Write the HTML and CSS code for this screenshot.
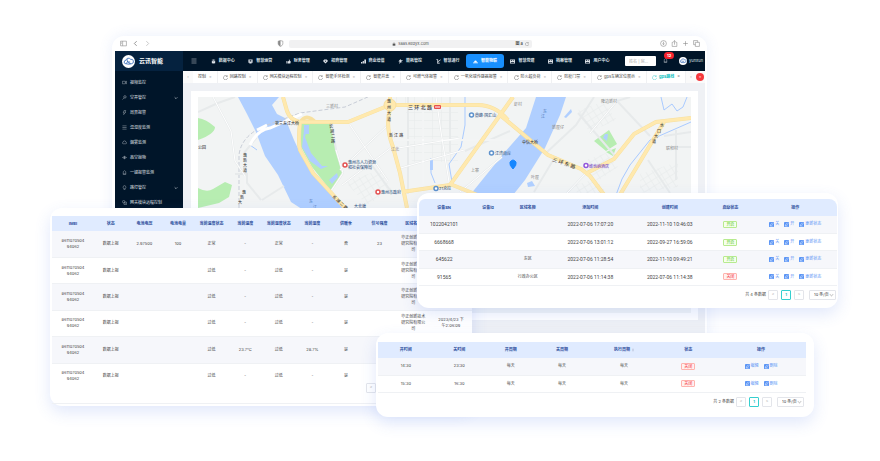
FILE: index.html
```html
<!DOCTYPE html>
<html lang="zh-CN">
<head>
<meta charset="utf-8">
<title>云讯智能</title>
<link rel="stylesheet" href="styles.css">
</head>
<body>
<svg class="defs" aria-hidden="true">
  <symbol id="reload" viewBox="0 0 12 12"><path d="M9.8 3.2A5 5 0 1 0 11 7M10.3.8v2.8H7.5"/></symbol>
  <symbol id="cube" viewBox="0 0 12 12"><path class="solid" d="M1 2.500 6 1l5 1.500-5 1.500zM2 4.500 6 5.500 10 4.500V10L6 11 2 10z"/></symbol>
  <symbol id="screen" viewBox="0 0 12 12"><path class="solid" fill-rule="evenodd" d="M1 1h10v8H8l1 2H3l1-2H1zM4 3v3h4V3z"/></symbol>
  <symbol id="hand" viewBox="0 0 12 12"><path class="solid" d="M1 5h2v6H1zM4 6l3-1V1l2 1v3h2v5l-2 1H4z"/></symbol>
  <symbol id="gem" viewBox="0 0 12 12"><path class="solid" fill-rule="evenodd" d="M3 1h6l3 4-6 6-6-6zM4 4l2 3 2-3z"/></symbol>
  <symbol id="bars" viewBox="0 0 12 12"><path class="solid" d="M0 7h3v4H0zM4 5h3v6H4zM8 1h4v10H8z"/></symbol>
  <symbol id="bolt" viewBox="0 0 12 12"><path class="solid" d="M6 0 1 6h3l-1 6 4-4h4L7 5h4V3H7z"/></symbol>
  <symbol id="gate" viewBox="0 0 12 12"><path d="M1 1h3v10M4 7l7-5M4 10h5" stroke-width="2"/></symbol>
  <symbol id="cloud" viewBox="0 0 14 12"><path class="solid" d="M4 6a3 3 0 0 1 6 0h1v2H3V6zM0 9h14v2H0z"/></symbol>
  <symbol id="doc" viewBox="0 0 12 12"><path class="solid" fill-rule="evenodd" d="M0 1h12v10H0zM2 3v2h3V3zM7 3v1h3V3zM2 7v2h8V7z"/></symbol>
  <symbol id="camera" viewBox="0 0 12 12"><path d="M1 3h7v6H1zM8 5l3-2v6L8 7"/></symbol>
  <symbol id="key" viewBox="0 0 12 12"><circle cx="7" cy="4.500" r="3"/><path d="M5 7 1 11M7 4v2"/></symbol>
  <symbol id="flash" viewBox="0 0 12 12"><path d="M5 1h4L7 5h2L4 11l1-5H3z"/></symbol>
  <symbol id="list" viewBox="0 0 12 12"><path d="M1 2h10M1 6h10M1 10h10"/></symbol>
  <symbol id="smoke" viewBox="0 0 12 12"><path d="M3 9a2 2 0 0 1 0-4 3 3 0 0 1 6 0 2 2 0 0 1 0 4z"/></symbol>
  <symbol id="eye" viewBox="0 0 12 12"><path d="M1 6q5-6 10 0-5 6-10 0zM6 3v6"/><circle cx="6" cy="6" r="1.500"/></symbol>
  <symbol id="alarm" viewBox="0 0 12 12"><path d="M3 10V4q3-5 6 0v6zM2 10h8"/></symbol>
  <symbol id="lamp" viewBox="0 0 12 12"><path d="M4 9Q1 5 4 2q2-1 4 0 3 3 0 7zM4 11h4"/></symbol>
  <symbol id="module" viewBox="0 0 12 12"><circle cx="4" cy="4" r="3"/><path d="M5 5h6v6H5zM7 8h2"/></symbol>
  <symbol id="edit" viewBox="0 0 12 12"><rect class="solid" width="12" height="12" rx="2"/><path class="cut" d="M3 9l1-3 4-4 2 2-4 4zM3 10h6"/></symbol>
</svg>

<main class="stage">
  <section class="browser">
    <header class="chrome">
      <div class="chrome-side">
        <svg class="tool" viewBox="0 0 12 12"><path d="M1 2h10v8H1zM4.500 2v8M2 4h1M2 6h1"/></svg>
        <svg class="tool" viewBox="0 0 12 12"><path d="M8 2 4 6l4 4" stroke-width="1.500"/></svg>
        <svg class="tool faint" viewBox="0 0 12 12"><path d="m4 2 4 4-4 4" stroke-width="1.500"/></svg>
      </div>
      <svg class="tool shield" viewBox="0 0 12 12"><path d="M6 1 2 2v5q1 3 4 4 3-1 4-4V2z"/><path class="solid" d="M6 1 2 2v5q1 3 4 4z"/></svg>
      <div class="address"><span></span>
        <span class="host"><svg class="lock" viewBox="0 0 12 12"><path class="solid" d="M2 5h8v6H2z"/><path d="M4 5V3q2-3 4 0v2"/></svg>saas.kedyx.com</span>
        <span class="address-end"><b>图 a</b><svg class="lock" viewBox="0 0 12 12"><use href="#reload"/></svg></span>
      </div>
      <div class="chrome-actions">
        <svg class="tool" viewBox="0 0 12 12"><circle cx="6" cy="6" r="5"/><path d="M6 3v5M4 6l2 2 2-2"/></svg>
        <svg class="tool" viewBox="0 0 12 12"><path d="M4 4H2v7h8V4H8M6 8V1M4 3l2-2 2 2"/></svg>
        <svg class="tool" viewBox="0 0 12 12"><path d="M6 2v8M2 6h8"/></svg>
        <svg class="tool" viewBox="0 0 12 12"><path d="M4 4h7v7H4zM8 4V1H1v7h3"/></svg>
      </div>
    </header>
    <div class="app">
      <aside class="sidebar">
        <div class="brand"><svg class="logo" viewBox="0 0 24 24"><circle cx="12" cy="12" r="12" fill="#fff"/><path d="M7 16a3 3 0 0 1 0-6 5 5 0 0 1 9-2 4 4 0 0 1 2 8q-6 2-11 0zm0 0q3-5 8-3M10 8q-2 6 6 8" fill="none" stroke="#2d65b5" stroke-width="1.500"/></svg>云讯智能</div>
        <nav class="menu">
          <a href="#"><svg><use href="#camera"/></svg>视频监控</a>
          <a href="#"><svg><use href="#key"/></svg>空开管控<svg class="more" viewBox="0 0 12 12"><path d="m2 4 4 4 4-4" stroke-width="2"/></svg></a>
          <a href="#"><svg><use href="#flash"/></svg>周界报警</a>
          <a href="#"><svg><use href="#list"/></svg>温湿度监测</a>
          <a href="#"><svg><use href="#smoke"/></svg>烟雾监测</a>
          <a href="#"><svg><use href="#eye"/></svg>高空抛物</a>
          <a href="#"><svg><use href="#alarm"/></svg>一键报警监测</a>
          <a href="#"><svg><use href="#lamp"/></svg>路灯管控<svg class="more" viewBox="0 0 12 12"><path d="m2 4 4 4 4-4" stroke-width="2"/></svg></a>
          <a href="#"><svg><use href="#module"/></svg>网关模块远程控制</a>
        </nav>
      </aside>
      <div class="main">
        <div class="topbar">
          <svg class="fold"><use href="#list"/></svg>
          <nav class="topnav">
            <a href="#"><svg><use href="#cube"/></svg>数据中心</a>
            <a href="#"><svg><use href="#screen"/></svg>智慧运营</a>
            <a href="#"><svg><use href="#hand"/></svg>财务管理</a>
            <a href="#"><svg><use href="#gem"/></svg>招商管理</a>
            <a href="#"><svg><use href="#bars"/></svg>商业增值</a>
            <a href="#"><svg><use href="#bolt"/></svg>能耗管控</a>
            <a href="#"><svg><use href="#gate"/></svg>智慧通行</a>
            <a href="#" class="active"><svg><use href="#cloud"/></svg>智能物联</a>
            <a href="#"><svg><use href="#doc"/></svg>智慧党建</a>
            <a href="#"><svg><use href="#doc"/></svg>档案管理</a>
            <a href="#"><svg><use href="#doc"/></svg>用户中心</a>
          </nav>
          <input class="search" type="text" aria-label="搜索" placeholder="姓名 | 房...">
          <span class="bell"><svg><use href="#alarm"/></svg><b>12</b></span>
          <span class="user"><svg viewBox="0 0 24 24"><circle cx="12" cy="12" r="12" fill="#fff"/><path d="M7 16a3 3 0 0 1 0-6 5 5 0 0 1 9-2 4 4 0 0 1 2 8q-6 2-11 0zm0 0q3-5 8-3" fill="none" stroke="#2d65b5" stroke-width="2"/></svg>yunxun</span>
        </div>
        <div class="tabs">
          <span class="arrow">‹</span>
          <a href="#" class="first">控制<i>×</i></a>
          <a href="#"><svg><use href="#reload"/></svg>回路控制<i>×</i></a>
          <a href="#"><svg><use href="#reload"/></svg>网关模块远程控制<i>×</i></a>
          <a href="#"><svg><use href="#reload"/></svg>智能手环检测<i>×</i></a>
          <a href="#"><svg><use href="#reload"/></svg>智能井盖<i>×</i></a>
          <a href="#"><svg><use href="#reload"/></svg>可燃气体报警<i>×</i></a>
          <a href="#"><svg><use href="#reload"/></svg>一氧化碳传感器报警<i>×</i></a>
          <a href="#"><svg><use href="#reload"/></svg>防火超负荷<i>×</i></a>
          <a href="#"><svg><use href="#reload"/></svg>防疫门禁<i>×</i></a>
          <a href="#"><svg><use href="#reload"/></svg>gps车辆定位展示<i>×</i></a>
          <a href="#" class="current"><svg><use href="#reload"/></svg>gps路线<i>×</i></a>
          <span class="arrow">›</span>
          <button class="close-all" aria-label="关闭全部">×</button>
        </div>
        <div class="content">
          <svg class="map" viewBox="198 97 493 216" preserveAspectRatio="xMinYMin slice">
            <defs>
              <pattern id="blocks" width="9" height="8" patternUnits="userSpaceOnUse"><path d="M0 0h9M0 0v8" stroke="#e6e9ea" stroke-width="1" fill="none"/></pattern>
              <pattern id="slant" width="6" height="6" patternUnits="userSpaceOnUse" patternTransform="rotate(-32)"><path d="M0 0h6M0 0v6" stroke="#e6e9ea" stroke-width="1" fill="none"/></pattern>
            </defs>
            <path d="M198 97h493v216H198z" fill="#f2f4f4"/>
            <path d="M393 97h56l-6 8h-50zM406 110h52v52h-46z" fill="url(#blocks)"/>
            <path d="m578 110 25-8 14 18-28 12zM578 163l28-10 12 14-20 14zM640 174l38-12v25l-38 6zM575 185l20-6 12 14h-30zM345 182l35-12 12 20-25 15z" fill="url(#slant)"/>
            <g fill="#b7edb1">
              <path d="M198 118q8 1 17 9 0 7-17 13zM198 188q9 5 15 1l12-7 7 3-3 12-10 6-21 5zM301 124l29-1 6 28 6 22-11 18-19-24-11-20zM298 123h12v28l-8-4zM594 141l15-11 8 14-11 7zM606 152l10-4-3 8z"/>
            </g>
            <g fill="#b0cfff">
              <path d="M238 97h41l-7 8 5 9 8 4 9 22 8 17 15 21 31 32v16h-20l-37-24-13-27-13-19-9-24-9-18zM536 97h30l-6 18-15 33-20 32-16 20h-43l38-47 22-25z"/>
              <path d="m304 130 4-5-3 12 6 16 11 13 6 0-7 3-11-8-8-14zM304 125h5v9h-5zM329 180l8-7 1 4-6 7zM605 134l3 0-1 7-4-3zM527 183l5-2 3 5-7 1zM430 158h3v12h-3zM564 117l7-8 1 3-6 6z"/>
            </g>
            <g fill="none" stroke="#a9caff" stroke-width="1">
              <path d="M465 97v28l-4 22-12 17 3 18M691 122l-41 18-20 25-8 14-6 16M661 97l3 13 8-6 5 7 6-4 4-10M431 158v15l4 10M250 145l7 5"/>
            </g>
            <g fill="none" stroke="#c8cdd7" stroke-width="1" stroke-dasharray="4 2">
              <path d="M239 208v-53q2-18 23-28l38-14 45-6 25-11"/>
            </g>
            <g fill="none" stroke="#e7eaeb" stroke-width="2">
              <path d="M198 112l20-9 17-6M213 97l18 34 4 30 10 15v17M235 174h12v9l14 17M257 137l-13 16M262 200l22-14M331 191l12-18-7-23-4-27M340 170l48-45M350 125l12 18 26 38M368 160l22 30M342 185l50-38M392 149l68-11M397 169l67-19M389 140h121M408 97v97M423 97v87M436 97l5 35 8 50M450 97v55M465 151l45-20M460 192l42-35M590 133l27-32 13-4M617 101l33 35M578 113l38 44M664 136l27-4M648 160l22 33M670 147h21M676 130v50M546 153l30-28 18-28M555 157l-21 35M567 193l20-21"/>
            </g>
            <g fill="none" stroke="#fff" stroke-width="1">
              <path d="M213 97l18 34 4 30 10 15v17M331 191l12-18-7-23M340 170l48-45M350 125l12 18 26 38M342 185l50-38M392 149l68-11M397 169l67-19M389 140h121M423 97v87M436 97l5 35 8 50M460 192l42-35M590 133l27-32M567 193l20-21"/>
            </g>
            <path d="M250 145q7-15 20-17l32-14M257 130l10-5" fill="none" stroke="#fff" stroke-width="3"/>
            <g fill="none" stroke="#f7e0a0" stroke-width="4">
              <path d="M283 97l4 14q3 9 13 11h48l32-13 10-4h88q17 0 30 15M300 122q-2 20 0 28l13 23 33 36M390 97v12q-5 17 3 38l7 26 7 35M402 192l48-7 63-88M450 184l30 12M500 115l48 40 33 14 9 7 15 20M587 173l27-14 20-25 22-12 35-4M664 122l-46 76"/>
              <path d="M300 123q6-11 16 0"/>
            </g>
            <g fill="none" stroke="#ffe9ae" stroke-width="3">
              <path d="M283 97l4 14q3 9 13 11h48l32-13 10-4h88q17 0 30 15M300 122q-2 20 0 28l13 23 33 36M390 97v12q-5 17 3 38l7 26 7 35M402 192l48-7 63-88M450 184l30 12M500 115l48 40 33 14 9 7 15 20M587 173l27-14 20-25 22-12 35-4M664 122l-46 76"/>
            </g>
            <circle cx="390" cy="105" r="6" fill="#ffe9ae" stroke="#f7e0a0"/>
            <rect x="434" y="105" width="7" height="4" rx="1" fill="#e8504c"/><path d="M435 107h5" stroke="#fff"/>
            <g class="poi-pins">
              <circle cx="471.500" cy="115" r="2" stroke="#5d91cc"/><circle cx="491.500" cy="153" r="2" stroke="#5d91cc"/><circle cx="436" cy="188.500" r="2" stroke="#5d91cc"/>
              <circle cx="345" cy="165" r="2" stroke="#e45252"/><circle cx="378" cy="192" r="2" stroke="#e45252"/><circle cx="586" cy="165.500" r="2" stroke="#9358db"/>
            </g>
            <path d="M513 169q-4-4-3-7 3-4 6 0 1 3-3 7z" fill="#1687ff" stroke="#1687ff"/>
            <g class="place">
              <text x="326" y="108">三新村</text><text x="391" y="151">江北</text><text x="471" y="172">上寨</text><text x="514" y="106">虾村</text><text x="552" y="129">新屋仔</text><text x="601" y="103">隆边新村</text><text x="666" y="150">联和村</text><text x="531" y="179">叶屋</text>
            </g>
            <g class="road">
              <text x="275" y="125">第三东江大桥</text><text x="408" y="109" class="wide">三 环 北 路</text><text x="389" y="137">新 江 路</text><text x="522" y="144">中信大桥</text>
              <text x="387" y="103">惠</text><text x="387" y="109">州</text><text x="387" y="115">大</text><text x="387" y="121">道</text>
              <text x="243" y="157">惠</text><text x="243" y="162">新</text><text x="243" y="167">大</text><text x="243" y="172">道</text>
              <text x="242" y="194">惠</text><text x="240" y="199">新</text><text x="238" y="204">大</text>
              <text x="329" y="128">长</text><text x="330" y="133">湖</text><text x="331" y="138">二</text><text x="331" y="143">路</text>
              <text transform="translate(332 197) rotate(42)">长 湖 二 路</text><text transform="translate(552 161) rotate(19)" class="wide">三 环 东 路</text>
              <text x="660" y="127">水</text><text x="657" y="133">口</text><text x="654" y="138">大</text><text x="652" y="143">道</text>
              <text x="198" y="149">公园</text>
            </g>
            <g class="water"><text x="543" y="113">东</text><text x="541" y="118">江</text><text x="309" y="203">东</text><text x="313" y="209">江</text></g>
            <g class="poi"><text x="475" y="117">鼎峰·国汇山</text><text x="495" y="155">江湾南岸</text><text x="439" y="190">21克拉</text><text x="348" y="164">惠州市人力资源</text><text x="348" y="169">和社会保障局</text><text x="381" y="194">惠州市政府</text><text x="354" y="208">大北塘</text></g>
            <text class="hotel" x="589" y="168">维也纳酒店</text>
          </svg>
        </div>
      </div>
    </div>
  </section>

  <section class="card sensors">
    <div class="clip">
      <table>
        <thead><tr><th>IMEI</th><th>状态</th><th>电池电压</th><th>电池电量</th><th>当前温度状态</th><th>当前温度</th><th>当前湿度状态</th><th>当前湿度</th><th>供暖季</th><th>信号强度</th><th>区域名称</th><th></th></tr></thead>
        <tbody>
          <tr><td>8611070504<br>94062</td><td>数据上报</td><td>2.97500</td><td>100</td><td>正常</td><td>-</td><td>正常</td><td>-</td><td>否</td><td>23</td><td>华正创新技术研究院有限公司</td><td></td></tr>
          <tr><td>8611070504<br>94062</td><td>数据上报</td><td></td><td></td><td>过低</td><td>-</td><td>过低</td><td>-</td><td>是</td><td></td><td>华正创新技术研究院有限公司</td><td></td></tr>
          <tr><td>8611070504<br>94062</td><td>数据上报</td><td></td><td></td><td>过低</td><td>-</td><td>过低</td><td>-</td><td>是</td><td></td><td>华正创新技术研究院有限公司</td><td></td></tr>
          <tr><td>8611070504<br>94062</td><td>数据上报</td><td></td><td></td><td>过低</td><td>-</td><td>过低</td><td>-</td><td>是</td><td></td><td>华正创新技术研究院有限公司</td><td>2023/4/23 下<br>午2:06:09</td></tr>
          <tr><td>8611070504<br>94062</td><td>数据上报</td><td></td><td></td><td>过低</td><td>23.7°C</td><td>过低</td><td>28.7%</td><td>是</td><td></td><td></td><td></td></tr>
          <tr><td>8611070504<br>94062</td><td>数据上报</td><td></td><td></td><td>过低</td><td>-</td><td>过低</td><td>-</td><td>是</td><td></td><td></td><td></td></tr>
        </tbody>
      </table>
    </div>
    <div class="sensor-foot"><button class="page" aria-label="上一页">&lt;</button></div>
  </section>

  <section class="card devices">
    <table>
      <thead><tr><th>设备SN</th><th>设备id</th><th>区域名称</th><th>添加时间</th><th>创建时间</th><th>启动状态</th><th>操作</th></tr></thead>
      <tbody>
        <tr><td class="num">1022042101</td><td></td><td></td><td class="num">2022-07-06 17:07:20</td><td class="num">2022-11-10 10:46:03</td><td><span class="tag on">开启</span></td><td><div class="ops"><a href="#"><svg><use href="#edit"/></svg>关</a><a href="#"><svg><use href="#edit"/></svg>开</a><a href="#"><svg><use href="#edit"/></svg>更新状态</a></div></td></tr>
        <tr><td class="num">6668668</td><td></td><td></td><td class="num">2022-07-06 13:01:12</td><td class="num">2022-09-27 16:59:06</td><td><span class="tag on">开启</span></td><td><div class="ops"><a href="#"><svg><use href="#edit"/></svg>关</a><a href="#"><svg><use href="#edit"/></svg>开</a><a href="#"><svg><use href="#edit"/></svg>更新状态</a></div></td></tr>
        <tr><td class="num">645622</td><td></td><td>东区</td><td class="num">2022-07-06 11:28:54</td><td class="num">2022-11-10 09:49:21</td><td><span class="tag on">开启</span></td><td><div class="ops"><a href="#"><svg><use href="#edit"/></svg>关</a><a href="#"><svg><use href="#edit"/></svg>开</a><a href="#"><svg><use href="#edit"/></svg>更新状态</a></div></td></tr>
        <tr><td class="num">91565</td><td></td><td>行政办公区</td><td class="num">2022-07-06 11:14:38</td><td class="num">2022-07-06 11:14:38</td><td><span class="tag off">关闭</span></td><td><div class="ops"><a href="#"><svg><use href="#edit"/></svg>关</a><a href="#"><svg><use href="#edit"/></svg>开</a><a href="#"><svg><use href="#edit"/></svg>更新状态</a></div></td></tr>
      </tbody>
    </table>
    <div class="pager"><span>共 4 条数据</span><button class="page">&lt;</button><button class="page here">1</button><button class="page">&gt;</button><span class="size"><select aria-label="每页条数"><option>10 条/页</option></select></span></div>
  </section>

  <section class="card schedule">
    <table>
      <thead><tr><th>开时间</th><th>关时间</th><th>开周期</th><th>关周期</th><th>执行周期 <svg class="sort" viewBox="0 0 6 12"><path class="solid" d="m3 1 3 4H0zM3 11l3-4H0z"/></svg></th><th>状态</th><th>操作</th></tr></thead>
      <tbody>
        <tr><td>14:30</td><td>23:30</td><td>每天</td><td>每天</td><td>每天</td><td><span class="tag off">关闭</span></td><td><div class="ops"><a href="#"><svg><use href="#edit"/></svg>编辑</a><a href="#"><svg><use href="#edit"/></svg>删除</a></div></td></tr>
        <tr><td>15:30</td><td>16:30</td><td>每天</td><td>每天</td><td>每天</td><td><span class="tag off">关闭</span></td><td><div class="ops"><a href="#"><svg><use href="#edit"/></svg>编辑</a><a href="#"><svg><use href="#edit"/></svg>删除</a></div></td></tr>
      </tbody>
    </table>
    <div class="pager"><span>共 2 条数据</span><button class="page">&lt;</button><button class="page here">1</button><button class="page">&gt;</button><span class="size"><select aria-label="每页条数"><option>10 条/页</option></select></span></div>
  </section>
</main>
</body>
</html>
```

FILE: styles.css
```css
* { box-sizing: border-box; }

body {
  margin: 0;
  background: #fff;
  color: #444;
  font: 4px/6px Inter, "Noto Sans CJK SC", sans-serif;
}

a { color: inherit; text-decoration: none; }
i { font-style: normal; }
button, input, select { margin: 0; padding: 0; font: inherit; color: inherit; }
svg { flex: none; fill: none; stroke: currentColor; }
.solid { fill: currentColor; stroke: none; }
.cut { fill: none; stroke: #fff; }
.defs { position: absolute; width: 0; height: 0; }

/* Overlapping panels share one grid row and differ in columns and top margin. */
.stage {
  display: grid;
  grid-template-columns:
    minmax(0, 50fr) minmax(0, 62fr) minmax(0, 264fr) minmax(0, 41fr)
    minmax(0, 55fr) minmax(0, 235fr) minmax(0, 107fr) minmax(0, 24fr)
    minmax(0, 42fr);
  align-items: start;
  padding-bottom: 45px;
  overflow: hidden;
}

.stage > section { grid-row: 1; }

/* Browser window */
.browser {
  grid-column: 3 / 7;
  margin-top: 36px;
  border: solid #fff;
  border-width: 0 2px 0 3px;
  border-radius: 12px 12px 0 0;
  background: #fff;
  box-shadow: 0 0 14px rgba(80, 120, 220, .12);
}

.chrome { display: flex; align-items: center; height: 15px; padding: 0 5px; color: #888; }
.tool { width: 7px; height: 7px; }
.faint { opacity: .5; }
.chrome-side, .chrome-actions { display: flex; gap: 4px; }
.chrome-side { flex: 159; gap: 5px; }
.shield { margin-right: 5px; }
.address { display: flex; flex: 239; justify-content: space-between; align-items: center; height: 8px; padding: 0 3px; border-radius: 2px; background: #f1f1f2; color: #555; }
.address > span { flex: 1; }
.address > .host { display: flex; justify-content: center; align-items: center; gap: 2px; }
.address > .address-end { display: flex; justify-content: flex-end; align-items: center; gap: 2px; }
.lock { width: 4px; height: 4px; }
.chrome-actions { flex: 170; justify-content: flex-end; }

.app { display: flex; min-height: 290px; }

.sidebar { flex: 68; min-width: 0; background: #001529; color: #c3cad1; }
.brand { display: flex; align-items: center; gap: 4px; height: 20px; padding-left: 7px; background: #05223f; color: #fff; font-size: 6px; font-weight: 700; }
.logo { width: 13px; height: 13px; stroke: none; }
.menu { padding-top: 4px; }
.menu a { display: flex; align-items: center; gap: 3px; height: 15px; padding: 0 5px 0 7px; font-weight: 500; white-space: nowrap; }
.menu svg, .topnav svg, .tabs svg, .bell svg { width: 5px; height: 5px; }
.menu .more { width: 4px; height: 4px; margin-left: auto; }

.main { flex: 522; min-width: 0; background: #eff1f5; }
.topbar { display: flex; align-items: center; height: 20px; padding-right: 2px; background: #001529; color: #dde2e7; }
.fold { width: 6px; height: 6px; margin: 0 7px 0 8px; }
.topnav { display: flex; flex: 1; min-width: 0; }
.topnav a { display: flex; flex: 1; justify-content: center; align-items: center; gap: 3px; height: 14px; border-radius: 3px; font-weight: 700; white-space: nowrap; }
.topnav .active { background: #1890ff; color: #fff; }
.search { width: 31px; height: 10px; margin: 0 7px 0 9px; padding: 0 4px; border: 0; border-radius: 1px; background: #fff; color: #777; }
.search::placeholder { color: #aaa; opacity: 1; }
.bell { position: relative; width: 16px; height: 6px; }
.bell svg { display: block; }
.bell b { position: absolute; top: -6px; left: 1px; width: 10px; height: 7px; border-radius: 4px; background: #f5222d; color: #fff; line-height: 7px; text-align: center; }
.user { display: flex; align-items: center; gap: 2px; }
.user svg { width: 8px; height: 8px; stroke: none; }

.tabs { display: flex; align-items: center; height: 12px; background: #fafafa; color: #444; white-space: nowrap; }
.tabs a { display: flex; flex: 1 1 auto; justify-content: center; align-items: center; gap: 2px; height: 12px; border-right: 1px solid #f0f1f3; background: #fff; }
.tabs i { margin-left: 1px; color: #999; }
.tabs .current { color: #13c2c2; font-weight: 700; }
.arrow { width: 10px; color: #999; text-align: center; }
.close-all { width: 8px; height: 8px; margin-right: 1px; border: 0; border-radius: 50%; background: #f5383d; color: #fff; line-height: 8px; }

.content { margin: 8px 7px 0 8px; padding: 6px 7px 7px; background: #fff; }
.map { display: block; width: 100%; height: 216px; stroke: none; }
.map text { fill: #555; font-size: 4px; }
.map .road text { fill: #444; font-weight: 500; }
.map .road .wide { font-size: 5px; }
.map .place text { fill: #888; }
.map .water text { fill: #4b78b8; }
.map .poi text { fill: #3f5f88; font-weight: 500; }
.map .hotel { fill: #8151c6; font-weight: 500; }
.poi-pins circle { fill: #fff; stroke-width: 1.5; }

/* Floating cards */
.card { position: relative; border-radius: 12px; background: #fff; box-shadow: 0 6px 16px rgba(70, 115, 230, .16); }
table { width: 100%; border-collapse: collapse; table-layout: fixed; text-align: center; }
th, td { padding: 0; }
th { background: #e0ebff; color: #2b4c9b; font-weight: 700; white-space: nowrap; }
td { border-bottom: 1px solid #eff1f4; }
tbody tr:nth-child(odd) { background: #f6f7fb; }
.num { font-family: Roboto, sans-serif; font-size: 5px; }

.sensors { grid-column: 2 / 6; margin-top: 208px; padding: 8px 0 2px 2px; }
.clip { height: 164px; overflow: hidden; }
.sensors table { height: 174px; }
.sensors th { width: 8%; height: 15px; }
.sensors th:first-child { width: 10%; }
.sensors th:last-child { width: auto; }
.sensors td { height: 26px; padding: 0 4px; }
.sensors td:first-child { padding: 0; }
.sensor-foot { display: flex; justify-content: flex-end; height: 24px; padding: 3px 96px 0 0; border-bottom: 1px solid #eff1f4; }

.devices { grid-column: 5 / 9; margin-top: 193px; padding: 6px 1px 8px 2px; }
.devices table { height: 87px; }
.devices th { height: 17px; }
.devices td { height: 17px; }
.devices th:nth-child(1) { width: 12%; }
.devices th:nth-child(2) { width: 9%; }
.devices th:nth-child(3) { width: 10%; }
.devices th:nth-child(4) { width: 20%; }
.devices th:nth-child(5) { width: 18%; }
.devices th:nth-child(6) { width: 11%; }
.devices th:first-child { border-top-left-radius: 6px; }
.devices th:last-child { border-top-right-radius: 8px; }
.devices .pager { padding: 4px 1px 0 0; }

.schedule { grid-column: 4 / 8; margin-top: 333px; padding: 9px 8px 10px 2px; }
.schedule th { height: 16px; }
.schedule td { height: 17px; }
.schedule th:nth-child(1) { width: 13%; }
.schedule th:nth-child(2), .schedule th:nth-child(3), .schedule th:nth-child(4) { width: 12%; }
.schedule th:nth-child(5) { width: 17%; }
.schedule th:nth-child(6) { width: 13%; }
.schedule .pager { padding: 4px 2px 0 0; }
.sort { width: 2px; height: 4px; margin-left: 1px; color: #b9c3d8; vertical-align: middle; }

.tag { display: inline-block; height: 7px; padding: 0 2px; border: 1px solid; border-radius: 1px; line-height: 5px; vertical-align: middle; }
.on { border-color: #b7eb8f; background: #f6ffed; color: #52c41a; }
.off { border-color: #ffb3ae; background: #fff1f0; color: #f5222d; }
.ops { display: flex; justify-content: center; gap: 5px; color: #5b95f5; }
.ops a { display: flex; align-items: center; gap: 1px; }
.ops svg { width: 5px; height: 5px; }

.pager { display: flex; justify-content: flex-end; align-items: center; gap: 2px; }
.page { width: 10px; height: 10px; border: 1px solid #e3e5ea; border-radius: 1px; background: #fff; color: #aaa; line-height: 8px; text-align: center; }
.here { border-color: #36cfcf; color: #13c2c2; font-weight: 700; }
.pager .here { margin: 0 1px; }
.size { position: relative; margin-left: 3px; }
.size::after { content: ""; position: absolute; top: 3px; right: 3px; width: 2px; height: 2px; border: solid #ccc; border-width: 0 1px 1px 0; transform: rotate(45deg); }
.size select { display: block; width: 27px; height: 10px; padding: 0 0 0 4px; border: 1px solid #e3e5ea; border-radius: 1px; background: #fff; appearance: none; }
```
